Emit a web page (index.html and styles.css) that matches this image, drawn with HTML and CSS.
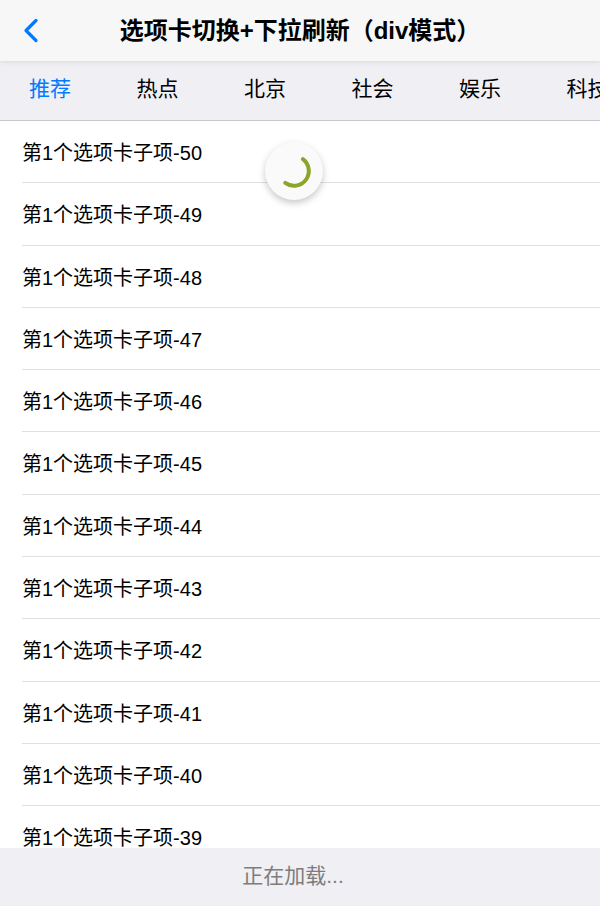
FILE: index.html
```html
<!DOCTYPE html>
<html lang="zh-CN">
<head>
<meta charset="utf-8">
<title>选项卡切换+下拉刷新（div模式）</title>
<link rel="stylesheet" href="styles.css">
</head>
<body>
<div class="app">
  <header class="bar-nav">
    <a class="back" href="#" aria-label="返回">
      <svg width="16" height="26" viewBox="0 0 16 26"><polyline points="13,2.5 3,12.5 13,22.5" fill="none" stroke="#007aff" stroke-width="3.2" stroke-linecap="round" stroke-linejoin="round"/></svg>
    </a>
    <h1 class="title">选项卡切换+下拉刷新（div模式）</h1>
    <span></span>
  </header>
  <nav class="tabs">
    <a class="tab active" href="#">推荐</a>
    <a class="tab" href="#">热点</a>
    <a class="tab" href="#">北京</a>
    <a class="tab" href="#">社会</a>
    <a class="tab" href="#">娱乐</a>
    <a class="tab" href="#">科技</a>
  </nav>
  <main class="content">
    <ul class="list">
      <li class="cell">第1个选项卡子项-50</li>
      <li class="cell">第1个选项卡子项-49</li>
      <li class="cell">第1个选项卡子项-48</li>
      <li class="cell">第1个选项卡子项-47</li>
      <li class="cell">第1个选项卡子项-46</li>
      <li class="cell">第1个选项卡子项-45</li>
      <li class="cell">第1个选项卡子项-44</li>
      <li class="cell">第1个选项卡子项-43</li>
      <li class="cell">第1个选项卡子项-42</li>
      <li class="cell">第1个选项卡子项-41</li>
      <li class="cell">第1个选项卡子项-40</li>
      <li class="cell">第1个选项卡子项-39</li>
    </ul>
    <div class="spinner">
      <svg width="40" height="40" viewBox="0 0 40 40"><circle cx="20" cy="20" r="14.8" fill="none" stroke="#8aa52a" stroke-width="4" stroke-linecap="round" stroke-dasharray="46 200" transform="rotate(-53 20 20)"/></svg>
    </div>
  </main>
  <footer class="loading">正在加载...</footer>
</div>
</body>
</html>
```
FILE: styles.css
```css
html, body {
  margin: 0;
  padding: 0;
  background: #fff;
}
body {
  font-family: "Liberation Sans", "Noto Sans CJK SC", sans-serif;
  color: #000;
}
.app {
  width: 600px;
  height: 906px;
  display: flex;
  flex-direction: column;
  overflow: hidden;
}
.bar-nav {
  position: relative;
  z-index: 2;
  height: 61px;
  flex: none;
  background: #f7f7f7;
  display: grid;
  grid-template-columns: 1fr auto 1fr;
  align-items: center;
  box-shadow: 0 0 6px rgba(0, 0, 0, 0.13);
}
.back {
  display: flex;
  align-items: center;
  padding-left: 23px;
  height: 100%;
}
.back svg {
  display: block;
}
.title {
  margin: 0;
  font-size: 24px;
  font-weight: 600;
  white-space: nowrap;
  line-height: 61px;
}
.tabs {
  flex: none;
  height: 55px;
  padding-bottom: 4px;
  background: #efeff4;
  border-bottom: 1px solid #c8c7cc;
  display: flex;
  align-items: center;
  gap: 65.5px;
  padding-left: 29px;
  white-space: nowrap;
  overflow: hidden;
}
.tab {
  flex: none;
  font-size: 21px;
  color: #000;
  text-decoration: none;
  line-height: 55px;
}
.tab.active {
  color: #007aff;
}
.content {
  position: relative;
  flex: 1;
  overflow: hidden;
  background: #fff;
}
.list {
  list-style: none;
  margin: 0;
  padding: 0;
}
.cell {
  box-sizing: border-box;
  height: 62.3px;
  padding-left: 22px;
  padding-top: 3px;
  font-size: 20px;
  line-height: 58.3px;
  position: relative;
}
.cell::after {
  content: "";
  position: absolute;
  left: 22px;
  right: 0;
  bottom: 0;
  height: 1px;
  background: #e0e0e0;
}
.spinner {
  position: absolute;
  left: 265px;
  top: 21px;
  width: 58px;
  height: 58px;
  border-radius: 50%;
  background: #fafafa;
  box-shadow: 0 3px 7px rgba(0, 0, 0, 0.22);
  display: flex;
  align-items: center;
  justify-content: center;
}
.loading {
  flex: none;
  height: 58px;
  background: #efeff4;
  color: #7d7d7d;
  font-size: 21px;
  line-height: 56px;
  text-align: center;
  padding-right: 14px;
}
```
